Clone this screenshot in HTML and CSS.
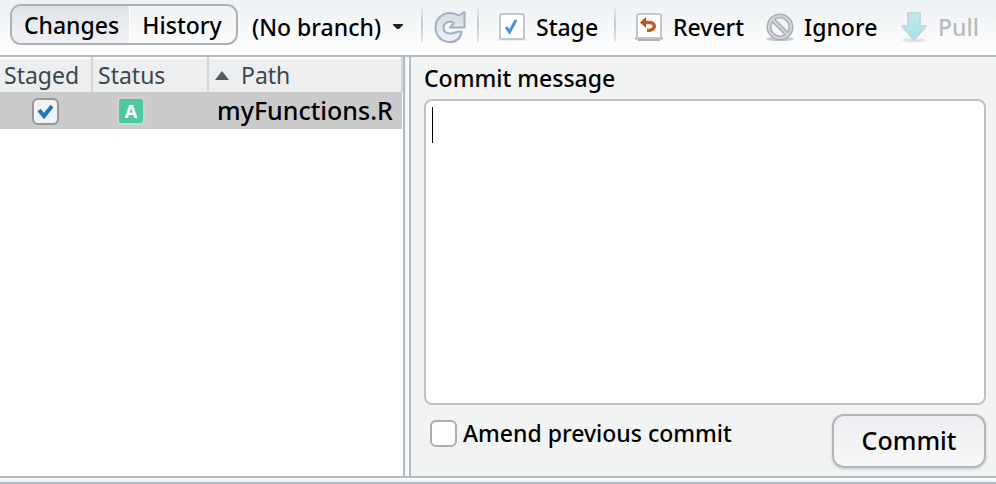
FILE: index.html
```html
<!DOCTYPE html>
<html lang="en">
<head>
<meta charset="utf-8">
<meta name="viewport" content="width=device-width, initial-scale=1">
<title>Review Changes</title>
<link rel="stylesheet" href="styles.css">
</head>
<body>
<div class="window">
  <header class="toolbar">
    <div class="segmented">
      <button class="segment active" type="button">Changes</button>
      <button class="segment" type="button">History</button>
    </div>
    <div class="branch">
      <select class="branch-select" aria-label="Branch"><option>(No branch)</option></select>
      <svg class="branch-arrow" width="12" height="6" viewBox="0 0 12 6" aria-hidden="true"><path d="M1 0h10v1L7 5H5L1 1z" fill="#222"/></svg>
    </div>
    <span class="divider"></span>
    <button class="tool refresh" type="button" aria-label="Refresh">
      <svg width="34" height="34" viewBox="0 0 34 34" aria-hidden="true">
        <defs><linearGradient id="steel" x1="0" y1="0" x2="0" y2="1"><stop offset="0" stop-color="#d3dbe5"/><stop offset="1" stop-color="#edf3fc"/></linearGradient></defs>
        <path d="M26 5.500L31.500 2v15.500H17l4-4.500C16 10 10.500 13 10.500 17.500c0 4 3 6 7 6 4 0 4-2 11-2C27.500 28.500 23 32 17 32 8.500 32 2.500 25.500 2.500 17.500 2.500 9 9 3 17 3c3.500 0 6.500 1 9 2.500z" fill="url(#steel)" stroke="#a5b0be" stroke-width="2" stroke-linejoin="round"/>
      </svg>
    </button>
    <span class="divider"></span>
    <button class="tool stage" type="button">
      <svg width="28" height="28" viewBox="0 0 28 28" aria-hidden="true">
        <path d="M0 26.500h28" stroke="#dce0e4" stroke-width="2"/>
        <rect x="2" y="1" width="24" height="25" rx="2" fill="#fff" stroke="#c1c7cd" stroke-width="2"/>
        <path d="M8 14l3.500 5L18 7" fill="none" stroke="#4a90dc" stroke-width="3"/>
      </svg>
      <span>Stage</span>
    </button>
    <span class="divider"></span>
    <button class="tool revert" type="button">
      <svg width="28" height="28" viewBox="0 0 28 28" aria-hidden="true">
        <path d="M0 25.500h28M3 27h22" stroke="#a9b0b8" stroke-width="2"/>
        <rect x="2" y="1" width="24" height="24" rx="2" fill="#fff" stroke="#c1c7cd" stroke-width="2"/>
        <path d="M5 9.500L11 4v11z" fill="#bd4d18"/>
        <path d="M9 9.500h5c4 0 6 2 5 5-1 2-3 3-7 3" fill="none" stroke="#c55b27" stroke-width="3.500"/>
      </svg>
      <span>Revert</span>
    </button>
    <button class="tool ignore" type="button">
      <svg width="28" height="28" viewBox="0 0 28 28" aria-hidden="true">
        <ellipse cx="14" cy="26" rx="14" ry="2" fill="#c5c9ce"/>
        <circle cx="14" cy="14" r="11" fill="#f2f4f5" stroke="#a7adb6" stroke-width="5"/>
        <path d="M6 6l16 16" stroke="#a7adb6" stroke-width="5"/>
        <circle cx="14" cy="14" r="11" fill="none" stroke="#d2d6db" stroke-width="2"/>
        <path d="M6.500 6.500l15 15" stroke="#d2d6db" stroke-width="2"/>
      </svg>
      <span>Ignore</span>
    </button>
    <button class="tool pull" type="button" disabled>
      <svg width="28" height="30" viewBox="0 0 28 30" aria-hidden="true">
        <defs><linearGradient id="aqua" x1="0" y1="0" x2="0" y2="1"><stop offset="0" stop-color="#bdebec"/><stop offset="1" stop-color="#a8dfe3"/></linearGradient></defs>
        <ellipse cx="14" cy="28" rx="12" ry="2" fill="#e1e3e8"/>
        <path d="M8 1h12v13h6L14 28 2 14h6z" fill="url(#aqua)" stroke="#c6d5df" stroke-width="2" stroke-linejoin="round"/>
      </svg>
      <span>Pull</span>
    </button>
  </header>
  <main class="panes">
    <section class="files">
      <table class="file-table">
        <colgroup><col class="col-staged"><col class="col-status"><col></colgroup>
        <thead>
          <tr>
            <th>Staged</th>
            <th>Status</th>
            <th><svg class="sort" width="14" height="9" viewBox="0 0 14 9" aria-hidden="true"><path d="M7 0l7 9H0z" fill="#525b60"/></svg>Path</th>
          </tr>
        </thead>
        <tbody>
          <tr>
            <td><input class="staged-check" type="checkbox" aria-label="Stage myFunctions.R" checked></td>
            <td><span class="badge">A</span></td>
            <td>myFunctions.R</td>
          </tr>
        </tbody>
      </table>
    </section>
    <div class="splitter"></div>
    <section class="commit">
      <label class="commit-label" for="message">Commit message</label>
      <div class="message-box">
        <textarea class="message" id="message"></textarea>
        <span class="caret"></span>
      </div>
      <div class="commit-actions">
        <label class="amend"><input class="amend-check" type="checkbox">Amend previous commit</label>
        <button class="commit-button" type="button">Commit</button>
      </div>
    </section>
  </main>
  <div class="bottom-splitter"></div>
</div>
</body>
</html>
```
FILE: styles.css
```css
* { box-sizing: border-box; }
body {
  margin: 0;
  font: 500 23px/32px "Noto Sans", "Open Sans", sans-serif;
  color: #000;
  background: #fff;
}
button, select, textarea { font: inherit; color: inherit; }
button, select { margin: 0; padding: 0; border: 0; background: none; }
.window { display: flex; flex-direction: column; min-height: 100vh; }

.toolbar {
  display: flex;
  align-items: center;
  height: 57px;
  padding: 0 0 2px 10px;
  border-bottom: 2px solid #b2bac3;
  background: linear-gradient(#edf1f3, #fff);
}
.segmented {
  display: flex;
  width: 228px;
  height: 41px;
  margin: 0 14px 4px 0;
  overflow: hidden;
  border: 2px solid #adb1b6;
  border-radius: 11px;
  background: linear-gradient(#f0f2f4, #fafbfb);
}
.segment { flex: 1 1 0; padding-right: 2px; }
.segment.active { flex: 0 0 118px; padding-left: 4px; background: linear-gradient(#e0e4e8, #f0f1f4); border-right: 1px solid #fff; }
.branch { display: flex; align-items: center; width: 169px; gap: 8px; }
.branch-select { width: 132px; appearance: none; }
.branch-arrow { flex: none; }
.divider { flex: none; width: 2px; height: 34px; margin-bottom: 4px; background: linear-gradient(#e4e8ea, #c3c7cb, #e4e8ea); }
.tool { display: flex; align-items: center; gap: 10px; flex: none; white-space: nowrap; }
.tool svg { flex: none; }
.refresh { width: 54px; padding-left: 10px; }
.stage { width: 135px; padding-left: 19px; }
.revert { width: 150px; padding-left: 19px; }
.ignore { width: 134px; }
.pull { width: 82px; color: #b8bbbc; }

.panes { display: flex; flex: 1; }
.files { flex: 0 0 403px; }
.file-table { width: 100%; border-collapse: collapse; table-layout: fixed; }
.col-staged { width: 92px; }
.col-status { width: 116px; }
.file-table th {
  height: 34px;
  padding: 0 0 2px 4px;
  border-top: 2px solid #fff;
  border-right: 2px solid #d3d6d9;
  background: #eceef0;
  color: #3b474d;
  font-weight: 400;
  line-height: 30px;
  text-align: left;
}
.file-table th + th { padding-left: 5px; border-left: 2px solid #fff; }
.sort { margin: 0 12px 4px 1px; vertical-align: middle; }
.file-table td { height: 37px; padding: 0; background: #cbcbcb; font-size: 25px; vertical-align: middle; }
.file-table td:nth-child(2) { padding-left: 25px; }
.file-table td:nth-child(3) { padding-left: 9px; padding-bottom: 2px; }
.staged-check, .amend-check {
  appearance: none;
  display: block;
  flex: none;
  width: 27px;
  height: 27px;
  margin: 0;
  border: 2px solid #adadad;
  border-radius: 6px;
  background: #fff;
}
.staged-check {
  margin: 2px 0 0 32px;
  border-color: #959799;
  background: #f2f3f5 url("data:image/svg+xml,%3Csvg xmlns='http://www.w3.org/2000/svg' viewBox='0 0 23 23'%3E%3Cpath d='M5 10l5 6 8-10' fill='none' stroke='%231f76b9' stroke-width='4'/%3E%3C/svg%3E") center / 23px 23px no-repeat;
}
.badge {
  display: block;
  width: 28px;
  height: 28px;
  border: 2px solid #ced3d1;
  border-radius: 4px;
  background: #4dc9a2;
  color: #fff;
  font: 700 18px/24px "Noto Sans", sans-serif;
  text-align: center;
}
.splitter { flex: 0 0 8px; border: solid #b2bac3; border-width: 0 2px; background: linear-gradient(90deg, #edf0f2, #fff); }

.commit { display: flex; flex: 1; flex-direction: column; padding: 5px 10px 8px 13px; background: #f2f4f4; }
.commit-label { margin-bottom: 5px; }
.message-box { position: relative; display: flex; flex: 1; }
.message { width: 100%; padding: 6px; border: 2px solid #bfc1c1; border-radius: 8px; background: #fff; outline: 0; resize: none; }
.caret { position: absolute; top: 8px; left: 8px; width: 1px; height: 36px; background: #000; }
.commit-actions { display: flex; align-items: flex-start; justify-content: space-between; padding-top: 9px; }
.amend { display: flex; align-items: center; gap: 6px; padding: 3px 0 0 6px; }
.commit-button {
  width: 154px;
  height: 54px;
  padding-bottom: 2px;
  border: 2px solid #b3b5b8;
  border-radius: 12px;
  background: linear-gradient(#edeef1, #f8f8f9);
  box-shadow: 0 1px 3px #c6c8c9;
  font-size: 25px;
}
.bottom-splitter { flex: none; height: 8px; border: solid #b2bac3; border-width: 2px 0; background: linear-gradient(#fff, #edf0f2); }
```
